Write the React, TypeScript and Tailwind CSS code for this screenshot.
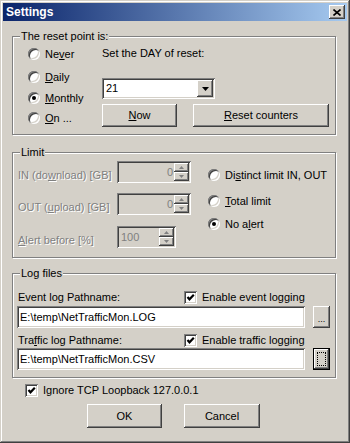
import React from 'react';

// classic win 3d borders
const raised = 'shadow-[inset_-1px_-1px_#404040,inset_1px_1px_#fff,inset_-2px_-2px_#808080]';
const sunken = 'shadow-[inset_1px_1px_#808080,inset_-1px_-1px_#fff,inset_2px_2px_#404040,inset_-2px_-2px_#d4d0c8]';
const grayText = 'text-[#808080] [text-shadow:1px_1px_0_#fff]';

function Group({ title, className, children }: { title: string; className: string; children: React.ReactNode }) {
  return (
    <div className={`ml-[9px] w-[324px] shrink-0 border border-[#808080] shadow-[1px_1px_0_#fff,inset_1px_1px_0_#fff] flex flex-col ${className}`}>
      <span className="-mt-[7px] ml-[7px] px-[1px] w-fit bg-[#d4d0c8] leading-[13px]">{title}</span>
      {children}
    </div>
  );
}

function Radio({ checked, children, className = '' }: { checked?: boolean; children: React.ReactNode; className?: string }) {
  return (
    <div className={`flex items-center h-[14px] gap-[5px] ${className}`}>
      <span className="w-[12px] h-[12px] shrink-0 rounded-full bg-white flex items-center justify-center shadow-[inset_1px_1px_#808080,inset_-1px_-1px_#fff,inset_2px_2px_#404040,inset_-2px_-2px_#d4d0c8]">
        {checked && <span className="w-[4px] h-[4px] rounded-full bg-black" />}
      </span>
      <span>{children}</span>
    </div>
  );
}

function Check({ className = '' }: { className?: string }) {
  return (
    <span className={`w-[13px] h-[13px] shrink-0 bg-white flex items-center justify-center ${sunken} ${className}`}>
      <svg width="9" height="9" viewBox="0 0 9 9">
        <path d="M1.5 4 L3.5 6.3 L7.8 1.8" fill="none" stroke="#000" strokeWidth="2.2" />
      </svg>
    </span>
  );
}

function SpinBtn({ up }: { up?: boolean }) {
  return (
    <div className={`flex-1 bg-[#d4d0c8] ${raised} flex items-center justify-center`}>
      <svg width="5" height="3" viewBox="0 0 5 3">
        <path d={up ? 'M0 3 L2.5 0 L5 3 Z' : 'M0 0 L2.5 3 L5 0 Z'} fill="#808080" />
      </svg>
    </div>
  );
}

function SpinEdit({ value, width, right }: { value: string; width: string; right?: boolean }) {
  return (
    <div className={`${sunken} ${width} h-[22px] shrink-0 flex p-[2px] bg-[#d4d0c8]`}>
      <span className={`flex-1 flex items-center text-[#808080] ${right ? 'justify-end pr-[1px]' : 'pl-[2px]'}`}>{value}</span>
      <div className="w-[15px] flex flex-col">
        <SpinBtn up />
        <SpinBtn />
      </div>
    </div>
  );
}

function Btn({ children, className }: { children: React.ReactNode; className: string }) {
  return (
    <button type="button" className={`bg-[#d4d0c8] ${raised} flex items-center justify-center shrink-0 ${className}`}>
      {children}
    </button>
  );
}

export default function App() {
  return (
    <div className="w-[350px] h-[443px] bg-[#d4d0c8] p-[3px] flex flex-col shadow-[inset_-1px_-1px_#404040,inset_1px_1px_#d4d0c8,inset_-2px_-2px_#808080,inset_2px_2px_#fff] font-['Liberation_Sans',Arial,sans-serif] text-[11px] leading-[13px] text-black">
      {/* Title bar */}
      <div className="h-[18px] shrink-0 flex items-center pl-[3px] pr-[2px] bg-[linear-gradient(90deg,#0a246a,#a6caf0)]">
        <span className="text-white font-bold text-[12px]">Settings</span>
        <button type="button" className={`ml-auto w-[16px] h-[14px] bg-[#d4d0c8] ${raised} flex items-center justify-center`}>
          <svg width="8" height="7" viewBox="0 0 8 7">
            <path d="M0.5 0.5 L7.5 6.5 M7.5 0.5 L0.5 6.5" stroke="#000" strokeWidth="1.6" />
          </svg>
        </button>
      </div>

      {/* Reset point */}
      <Group title="The reset point is:" className="mt-[15px] h-[99px]">
        <div className="flex">
          <div className="w-[89px] pl-[15px] flex flex-col">
            <Radio className="mt-[4px]">Ne<u>v</u>er</Radio>
            <Radio className="mt-[9px]"><u>D</u>aily</Radio>
            <Radio className="mt-[7px]" checked><u>M</u>onthly</Radio>
            <Radio className="mt-[6px]"><u>O</u>n ...</Radio>
          </div>
          <div className="flex flex-col">
            <div className="mt-[3px] h-[14px] flex items-center">Set the DAY of reset:</div>
            <div className={`mt-[18px] w-[113px] h-[21px] bg-white ${sunken} p-[2px] flex`}>
              <span className="flex-1 flex items-center pl-[2px]">21</span>
              <div className={`w-[16px] bg-[#d4d0c8] ${raised} flex items-center justify-center`}>
                <svg width="7" height="4" viewBox="0 0 7 4">
                  <path d="M0 0 L7 0 L3.5 4 Z" fill="#000" />
                </svg>
              </div>
            </div>
            <div className="mt-[5px] flex gap-[16px]">
              <Btn className="w-[75px] h-[23px]"><u>N</u>ow</Btn>
              <Btn className="w-[136px] h-[23px]"><u>R</u>eset counters</Btn>
            </div>
          </div>
        </div>
      </Group>

      {/* Limit */}
      <Group title="Limit" className="mt-[17px] h-[106px]">
        <div className="flex">
          <div className="pl-[5px] flex flex-col">
            <div className="mt-[2px] flex items-center">
              <span className={`w-[99px] pt-[6px] ${grayText}`}>IN (do<u>w</u>nload) [GB]</span>
              <SpinEdit value="0" width="w-[74px]" right />
            </div>
            <div className="mt-[10px] flex items-center">
              <span className={`w-[99px] pt-[6px] ${grayText}`}>OUT (<u>u</u>pload) [GB]</span>
              <SpinEdit value="0" width="w-[74px]" right />
            </div>
            <div className="mt-[11px] flex items-center">
              <span className={`w-[99px] pt-[6px] ${grayText}`}><u>A</u>lert before [%]</span>
              <SpinEdit value="100" width="w-[59px]" />
            </div>
          </div>
          <div className="ml-[17px] flex flex-col">
            <Radio className="mt-[9px]">Di<u>s</u>tinct limit IN, OUT</Radio>
            <Radio className="mt-[12px]"><u>T</u>otal limit</Radio>
            <Radio className="mt-[9px]" checked>No a<u>l</u>ert</Radio>
          </div>
        </div>
      </Group>

      {/* Log files */}
      <Group title="Log files" className="mt-[15px] h-[105px]">
        <div className="mt-[10px] pl-[5px] h-[14px] flex items-center">
          <span className="w-[166px]">Event log Pathname:</span>
          <Check />
          <span className="ml-[5px]">Enable event logging</span>
        </div>
        <div className="mt-[2px] pl-[4px] flex items-center gap-[8px]">
          <div className={`w-[288px] h-[22px] bg-white ${sunken} flex items-center pl-[3px]`}>E:\temp\NetTrafficMon.LOG</div>
          <Btn className="w-[17px] h-[22px] items-end pb-[4px] text-[9px] leading-[9px]">...</Btn>
        </div>
        <div className="mt-[5px] pl-[5px] h-[14px] flex items-center">
          <span className="w-[166px]">Tra<u>f</u>fic log Pathname:</span>
          <Check />
          <span className="ml-[5px]">Enable traffic logging</span>
        </div>
        <div className="mt-[1px] pl-[4px] flex items-center gap-[8px]">
          <div className={`w-[288px] h-[22px] bg-white ${sunken} flex items-center pl-[3px]`}>E:\temp\NetTrafficMon.CSV</div>
          <button type="button" className="w-[17px] h-[22px] border border-black flex shrink-0">
            <span className={`flex-1 bg-[#d4d0c8] ${raised} p-[3px] flex`}>
              <span className="flex-1 border border-dotted border-black" />
            </span>
          </button>
        </div>
      </Group>

      <div className="mt-[5px] ml-[22px] h-[14px] flex items-center">
        <Check />
        <span className="ml-[5px]">Ignore TCP Loopback 127.0.0.1</span>
      </div>

      <div className="mt-[7px] ml-[84px] flex gap-[22px]">
        <Btn className="w-[75px] h-[24px]">OK</Btn>
        <Btn className="w-[76px] h-[24px]">Cancel</Btn>
      </div>
    </div>
  );
}
